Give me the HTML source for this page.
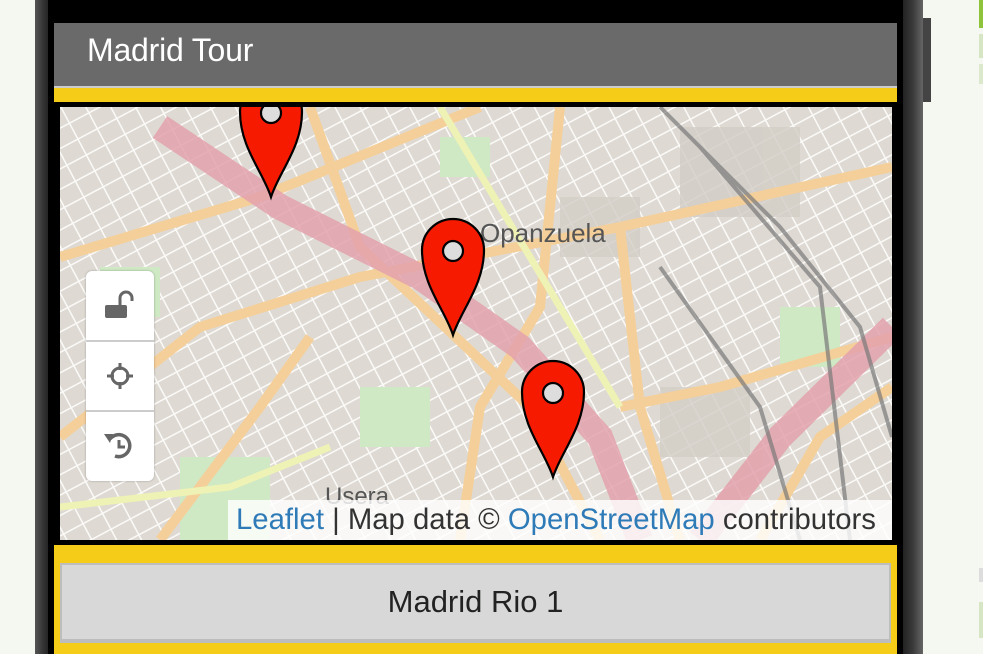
<!DOCTYPE html>
<html><head><meta charset="utf-8"><style>
html,body{margin:0;padding:0;width:983px;height:654px;overflow:hidden;background:#f5f8f1;font-family:"Liberation Sans",sans-serif}
.abs{position:absolute}
</style></head><body>
<div class="abs" style="left:35px;top:0;width:14px;height:654px;background:linear-gradient(90deg,#555,#333 60%,#222)"></div>
<div class="abs" style="left:48px;top:0;width:855px;height:654px;background:#000"></div>
<div class="abs" style="left:903px;top:0;width:20px;height:654px;background:linear-gradient(90deg,#222,#3a3a3a 50%,#666)"></div>
<div class="abs" style="left:923px;top:18px;width:8px;height:84px;background:#444"></div>
<div class="abs" style="left:979px;top:0;width:4px;height:28px;background:#8dc43c"></div>
<div class="abs" style="left:979px;top:34px;width:4px;height:24px;background:#d6e5c4"></div>
<div class="abs" style="left:979px;top:64px;width:4px;height:20px;background:#dce8cc"></div>
<div class="abs" style="left:979px;top:568px;width:4px;height:14px;background:#ddd"></div>
<div class="abs" style="left:979px;top:602px;width:4px;height:36px;background:#d6e5c4"></div>
<div class="abs" style="left:54px;top:23px;width:843px;height:63px;background:#6a6a6a"></div>
<div class="abs" style="left:87px;top:32px;color:#fff;font-size:32px;letter-spacing:-0.2px">Madrid Tour</div>
<div class="abs" style="left:54px;top:86px;width:843px;height:2px;background:#ccc"></div>
<div class="abs" style="left:54px;top:88px;width:843px;height:14px;background:#f5cd18"></div>
<svg class="abs" style="left:60px;top:107px" width="832" height="433" viewBox="0 0 832 433">
<defs>
<pattern id="st" width="22" height="18" patternUnits="userSpaceOnUse" patternTransform="rotate(-28)">
<rect width="22" height="18" fill="#dedad3"/><path d="M0 0H22M0 0V18" stroke="#fbfaf8" stroke-width="3"/>
</pattern>
</defs>
<rect width="832" height="433" fill="url(#st)"/>
<g fill="#cfe9c4"><rect x="40" y="160" width="60" height="50"/><rect x="300" y="280" width="70" height="60"/><rect x="720" y="200" width="60" height="60"/><rect x="120" y="350" width="90" height="83"/><rect x="380" y="30" width="50" height="40"/></g>
<g fill="#d2cdc6" opacity=".8"><rect x="620" y="20" width="120" height="90"/><rect x="500" y="90" width="80" height="60"/><rect x="600" y="280" width="90" height="70"/></g>
<g fill="none" stroke="#f4cf9a" stroke-width="10">
<path d="M0 150 L200 90 L420 0"/><path d="M0 330 L140 220 L300 170 L560 120 L832 60"/>
<path d="M250 0 L300 140 L470 300 L540 433"/><path d="M500 0 L480 200 L420 300 L400 433"/>
<path d="M560 120 L580 300 L620 433"/><path d="M832 230 L660 280 L560 300"/>
<path d="M100 433 L200 300 L250 230"/><path d="M700 433 L760 330 L832 280"/>
</g>
<g fill="none" stroke="#eef3b5" stroke-width="7"><path d="M380 0 L470 150 L560 300"/><path d="M0 400 L170 380 L270 340"/></g>
<g fill="none" stroke="#e3a1ac" stroke-width="26" opacity=".85"><path d="M100 20 L220 100 L360 170 L460 240 L540 330 L580 433"/><path d="M640 433 L720 330 L832 220"/></g>
<g fill="none" stroke="#7a7a7a" stroke-width="4" opacity=".7"><path d="M600 0 L720 120 L800 220 L832 330"/><path d="M640 40 L760 180 L790 433"/><path d="M600 160 L700 300 L740 433"/></g>
<text x="420" y="135" font-size="26" fill="#555" font-family="Liberation Sans">Opanzuela</text>
<text x="265" y="397" font-size="24" fill="#555" font-family="Liberation Sans">Usera</text>
</svg>
<svg class="abs" style="left:60px;top:107px;overflow:hidden" width="832" height="433">
<g stroke="#000" stroke-width="2.2">
<g transform="translate(178,-30)"><path d="M33 120 C25 95 2 70 2 35 A31 31 0 0 1 64 35 C64 70 41 95 33 120Z" fill="#f61b00"/><circle cx="33" cy="36" r="10" fill="#ddd"/></g>
<g transform="translate(360,108)"><path d="M33 120 C25 95 2 70 2 35 A31 31 0 0 1 64 35 C64 70 41 95 33 120Z" fill="#f61b00"/><circle cx="33" cy="36" r="10" fill="#ddd"/></g>
<g transform="translate(460,250)"><path d="M33 120 C25 95 2 70 2 35 A31 31 0 0 1 64 35 C64 70 41 95 33 120Z" fill="#f61b00"/><circle cx="33" cy="36" r="10" fill="#ddd"/></g>
</g>
</svg>
<div class="abs" style="left:228px;top:500px;width:664px;height:40px;background:rgba(255,255,255,.8)"></div>
<div class="abs" style="left:236px;top:503px;font-size:29.3px;color:#333;white-space:nowrap"><span style="color:#2e7bb8">Leaflet</span> | Map data © <span style="color:#2e7bb8">OpenStreetMap</span> contributors</div>
<div class="abs" style="left:86px;top:271px;width:68px;height:210px;background:#fff;border-radius:6px;box-shadow:0 0 2px rgba(0,0,0,.3)"></div>
<div class="abs" style="left:86px;top:340px;width:68px;height:2px;background:#ccc"></div>
<div class="abs" style="left:86px;top:410px;width:68px;height:2px;background:#ccc"></div>
<svg class="abs" style="left:86px;top:271px" width="68" height="210">
<rect x="19" y="34" width="22" height="13" rx="2" fill="#666"/>
<path d="M34 34 V27 a6 6 0 0 1 12 0 v3" fill="none" stroke="#666" stroke-width="3"/>
<circle cx="34" cy="105" r="8" fill="none" stroke="#666" stroke-width="3"/>
<path d="M34 92 V99 M34 111 V118 M21 105 H28 M40 105 H47" stroke="#666" stroke-width="3"/>
<path d="M24 168 A11 11 0 1 1 29 185" fill="none" stroke="#666" stroke-width="3.5"/>
<path d="M18 163 L27 163 L24 172Z" fill="#666"/>
<path d="M33 169 V176 H39" fill="none" stroke="#666" stroke-width="3"/>
</svg>
<div class="abs" style="left:54px;top:545px;width:843px;height:109px;background:#f5cd18"></div>
<div class="abs" style="left:60px;top:563px;width:831px;height:80px;background:#bdbdbd"></div>
<div class="abs" style="left:62px;top:565px;width:827px;height:74px;background:#d7d8d7"></div>
<div class="abs" style="left:60px;top:584px;width:831px;text-align:center;font-size:31px;color:#222">Madrid Rio 1</div>
</body></html>
